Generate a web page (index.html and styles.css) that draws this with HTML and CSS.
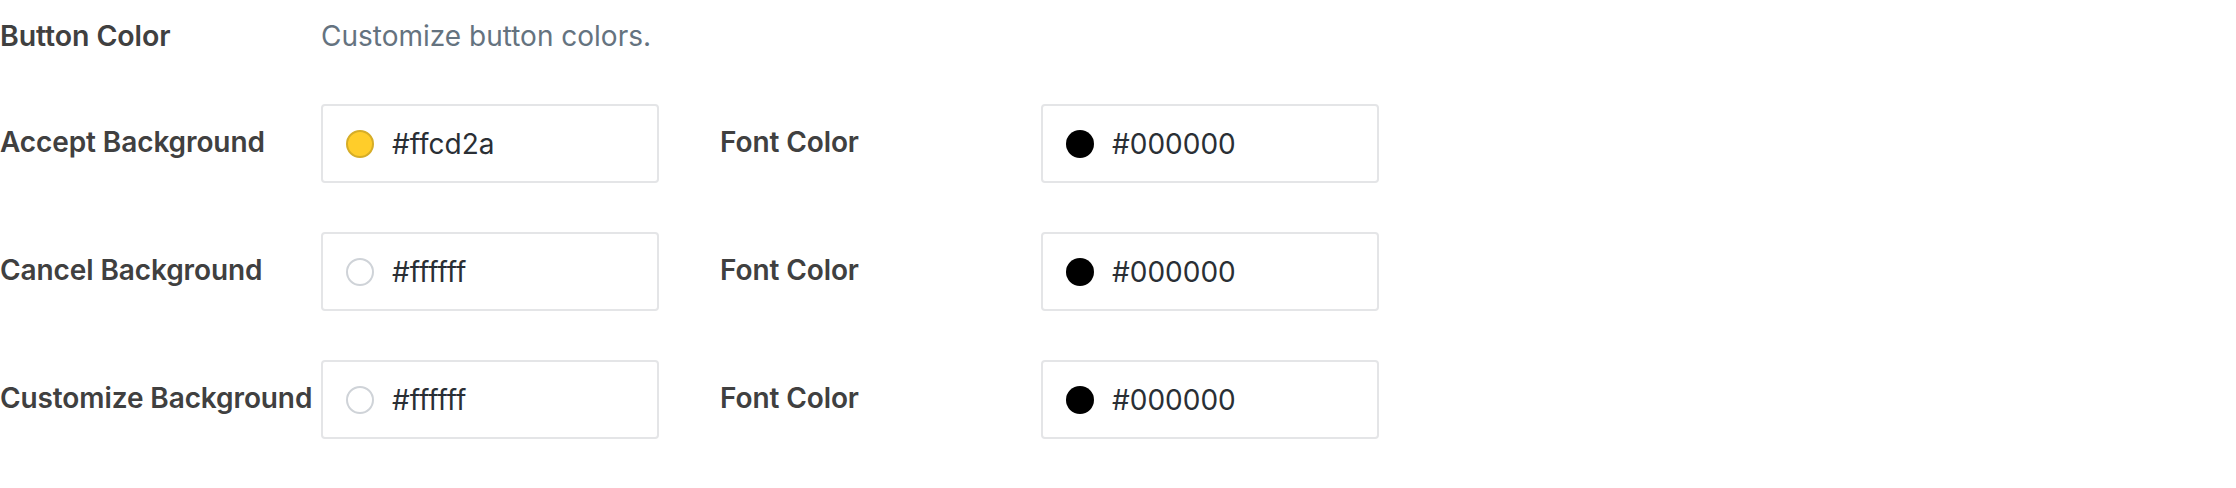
FILE: index.html
```html
<!DOCTYPE html>
<html lang="en">
<head>
<meta charset="utf-8">
<title>Button Color</title>
<link rel="stylesheet" href="styles.css">
</head>
<body>
<div class="settings">
  <div class="title-row">
    <div class="label">Button Color</div>
    <div class="desc">Customize button colors.</div>
  </div>
  <div class="row">
    <div class="field">
      <div class="label">Accept Background</div>
      <div class="color-input"><span class="swatch swatch-yellow"></span><span class="value">#ffcd2a</span></div>
    </div>
    <div class="field">
      <div class="label">Font Color</div>
      <div class="color-input"><span class="swatch swatch-black"></span><span class="value">#000000</span></div>
    </div>
  </div>
  <div class="row">
    <div class="field">
      <div class="label">Cancel Background</div>
      <div class="color-input"><span class="swatch swatch-white"></span><span class="value">#ffffff</span></div>
    </div>
    <div class="field">
      <div class="label">Font Color</div>
      <div class="color-input"><span class="swatch swatch-black"></span><span class="value">#000000</span></div>
    </div>
  </div>
  <div class="row">
    <div class="field">
      <div class="label">Customize Background</div>
      <div class="color-input"><span class="swatch swatch-white"></span><span class="value">#ffffff</span></div>
    </div>
    <div class="field">
      <div class="label">Font Color</div>
      <div class="color-input"><span class="swatch swatch-black"></span><span class="value">#000000</span></div>
    </div>
  </div>
</div>
</body>
</html>
```
FILE: styles.css
```css
html, body {
  margin: 0;
  padding: 0;
  background: #ffffff;
}
body {
  font-family: Inter, "Noto Sans", "Liberation Sans", sans-serif;
  font-size: 28px;
}
.settings {
  display: flex;
  flex-direction: column;
  gap: 49px;
  padding-top: 16px;
}
.title-row {
  display: flex;
  align-items: center;
  height: 39px;
}
.title-row .label {
  font-size: 28.5px;
  padding-bottom: 0;
}
.label {
  width: 321px;
  flex: none;
  font-weight: 600;
  color: #404040;
  white-space: nowrap;
  letter-spacing: -0.1px;
  padding-bottom: 3px;
}
.desc {
  color: #65737f;
  font-weight: 400;
}
.row {
  display: flex;
  gap: 61px;
}
.field {
  display: flex;
  align-items: center;
}
.color-input {
  box-sizing: border-box;
  width: 338px;
  height: 79px;
  border: 2px solid #e4e5e7;
  border-radius: 4px;
  display: flex;
  align-items: center;
  padding-left: 23px;
  gap: 18px;
}
.swatch {
  box-sizing: border-box;
  width: 28px;
  height: 28px;
  border-radius: 50%;
  flex: none;
}
.swatch-yellow {
  background: #ffcd2a;
  border: 2px solid #d6ad27;
}
.swatch-white {
  background: #ffffff;
  border: 2px solid #cfd3d8;
}
.swatch-black {
  background: #000000;
}
.value {
  color: #2a2f35;
  font-weight: 400;
}
```
